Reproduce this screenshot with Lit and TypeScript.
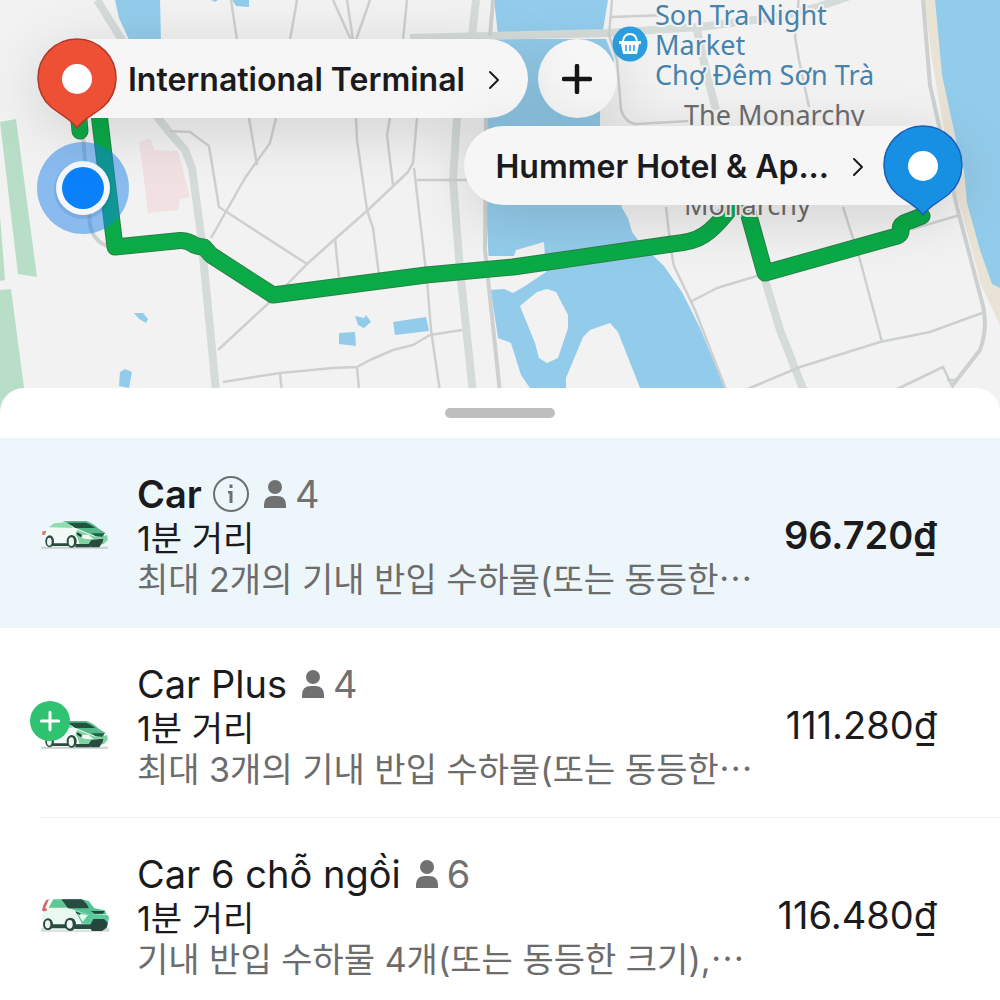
import { LitElement, html, svg, css, nothing } from "lit";
import { customElement, property, state } from "lit/decorators.js";

type CarKind = "car" | "plus" | "six";

interface Ride {
  id: CarKind;
  name: string;
  info: boolean;
  seats: number;
  eta: string;
  note: string;
  price: string;
}

const RIDES: Ride[] = [
  { id: "car", name: "Car", info: true, seats: 4, eta: "1분 거리", note: "최대 2개의 기내 반입 수하물(또는 동등한⋯", price: "96.720₫" },
  { id: "plus", name: "Car Plus", info: false, seats: 4, eta: "1분 거리", note: "최대 3개의 기내 반입 수하물(또는 동등한⋯", price: "111.280₫" },
  { id: "six", name: "Car 6 chỗ ngồi", info: false, seats: 6, eta: "1분 거리", note: "기내 반입 수하물 4개(또는 동등한 크기),⋯", price: "116.480₫" },
];

const ROUTE =
  "M98 105 L115 247 L180 240.500 Q188 240 194 245 Q199 247 204 247 L211 255 L273 295 L426 275 L513 267 L672 244 Q694 242 704 235 Q714 229 729 210 M746 205 L765 273 L897 236 Q902 234 901 229 Q899 226 904 223 L922 216 M79 120 L80 131";

@customElement("city-map")
export class CityMap extends LitElement {
  static styles = css`
    :host { display: block; position: relative; }
    .canvas { display: block; width: 100%; height: auto; }
    .park { fill: #b9dec8; }
    .clinic { fill: #f1e1e3; }
    .water { fill: #93cceb; }
    .land { fill: #f2f2f2; }
    .beach { fill: #e9e3d6; }
    .road { fill: none; stroke: #cdd0d0; stroke-width: 2.5; stroke-linejoin: round; }
    .bank { stroke-width: 4; }
    .avenue { fill: none; stroke: #d5dbd9; stroke-width: 8; stroke-linejoin: round; }
    .edge { fill: none; stroke: #2a8048; stroke-width: 17; stroke-linecap: round; stroke-linejoin: round; }
    .route { fill: none; stroke: #0aab47; stroke-width: 15; stroke-linecap: round; stroke-linejoin: round; }
    .label {
      position: absolute;
      margin: 0;
      font-family: "Noto Sans", sans-serif;
      font-size: 27px;
      line-height: 30px;
      white-space: nowrap;
      -webkit-text-stroke: 4px #f2f2f2;
      paint-order: stroke fill;
    }
    .market { top: 0; left: 65.5%; color: #4683ac; }
    .monarchy { top: 100px; left: 68.4%; color: #6c6c6c; }
    .monarchy-end { top: 190px; left: 68.4%; color: #6c6c6c; }
  `;

  render() {
    return html`
      <svg class="canvas" viewBox="0 0 1000 412" role="img" aria-label="Map">
        <rect class="land" width="1000" height="412" />
        <path class="park" d="M0 122 L16 119 L37 277 L18 274Z M0 215 L5 280 L0 281Z M0 290 L11 289 L24 388 V412 H0Z" />
        <path class="clinic" d="M139 142 L150 138 L155 150 L178 151 L190 197 L180 199 L178 210 L148 213Z" />
        <path class="water" d="M115 0 H160 L161 42 H130 L119 18Z M211 0 H218 L215 2Z M232 0 H249 V7 L236 6Z
          M134 313 L143 313 L148 319 L146 323 L139 319Z M120 372 L125 369 L132 372 L129 388 L119 386Z
          M355 316 L364 318 L366 315 L371 322 L364 328 L358 325Z M339 333 L355 332 L356 346 L339 344Z
          M393 322 L426 317 L429 331 L395 335Z" />
        <path class="water" d="M494 0 H608 L603 30 L498 35Z" />
        <path class="water" d="M487 39 H606 L614 60 L600 95 V130 L622 208 L628 218 L632 232 L642 245 L664 266 L682 292 L700 328 L725 388 L733 412 H535 L530 388 L521 375 L511 343 L498 338 L490 285 L486 205Z" />
        <path class="land" d="M487 256 L514 256 L516 250 L544 242 L546 272 L525 286 L513 293 L504 289 L490 290Z
          M520 306 L537 292 L547 289 L556 292 L568 315 L568 328 L558 358 L547 363 L539 358 L535 343Z
          M566 412 V378 L583 337 L590 330 L610 323 L618 332 L640 388 L648 412Z" />
        <path class="beach" d="M924 0 H940 L945 60 L960 120 L972 200 L1000 280 V325 L981 285 L968 235 L955 190 L943 125 L932 60Z" />
        <path class="water" d="M935 0 H1000 V288 L992 284 L980 250 L967 203 L964 170 L956 140 L942 75Z" />

        <path class="avenue" d="M97 0 L122 40 L140 75 L158 118 L170 133 L185 150 L192 168 L201 235 L218 412" />
        <path class="avenue" d="M476 0 L472 36 M457 118 L453 180 L460 270 L475 412" />
        <path class="avenue" d="M410 38 L490 36 L607 33 L700 27 L770 18 L815 8 L850 -4 M696 26 L707 75 L716 110 M765 280 L780 330 L812 412" />
        <path class="road bank" d="M83 135 L90 225 Q94 242 108 246 M493 0 L490 36 M486 118 L485 250 L502 412" />
        <path class="road" d="M170 131 L190 132 L209 146 L219 207 L307 264 M276 118 L270 143 L245 178 L211 238 M249 118 L257 165
          M218 350 L272 300 L307 264 L335 239 L368 210 L408 172 L413 163 L417 118
          M223 382 L280 373 L333 368 L357 367 L370 360 L393 350 L413 345 L430 335 L462 330 M280 374 L284 412 M357 367 L360 400
          M335 239 L339 277 M356 118 L357 140 L367 210 L373 228 L379 275 M390 118 L387 135 L393 185
          M414 168 L427 280 L431 330 L443 412 M417 180 H467
          M333 0 L351 40 M347 0 L353 40 M370 0 L356 40 M407 0 L403 40 M231 0 L237 40 M297 0 L290 40
          M612 0 L609 35 L617 60 L621 110 Q625 122 635 124 L690 121 M611 17 L668 15
          M799 -4 L795 37 L799 60 L809 107 M843 207 L860 260 L882 342 M912 229 L960 215
          M692 301 L717 288 L757 276 M745 390 L800 367 L880 342 L930 332 L982 313
          M666 207 L671 250 L674 266 L695 310 L730 400 M895 390 L943 367 L953 388 M947 380 H957" />
        <path class="road bank" d="M923 0 L930 85 L940 130 L957 207 L983 306 Q988 328 980 350 L952 386" />

        <circle cx="630" cy="44" r="17.500" fill="#2c9fe0" />
        <path d="M623 41 Q624 34 630 34 Q636 34 637 41" fill="none" stroke="#fff" stroke-width="2" />
        <path d="M619 41 H641 V44 H639 L637 54 H623 L621 44 H619Z" fill="#fff" />
        <path d="M626 45 V51 M630 45 V51 M634 45 V51" stroke="#2c9fe0" stroke-width="1.500" />

        <path class="edge" d=${ROUTE} />
        <path class="route" d=${ROUTE} />
        <circle cx="83" cy="188" r="46" fill="#1680ea" fill-opacity="0.48" />
        <circle cx="83" cy="190" r="29" fill="#20507e" fill-opacity="0.14" />
        <circle cx="83" cy="188" r="27" fill="#f4f8fd" />
        <circle cx="83" cy="188" r="21" fill="#0a80fb" />
      </svg>
      <p class="label market">Son Tra Night<br />Market<br />Chợ Đêm Sơn Trà</p>
      <p class="label monarchy">The Monarchy</p>
      <p class="label monarchy-end">Monarchy</p>
    `;
  }
}

const chevron = html`<svg class="chevron" viewBox="0 0 12 20" aria-hidden="true">
  <path d="M2 2 L10 10 L2 18" fill="none" stroke="#1c1c1e" stroke-width="2" stroke-linecap="round" stroke-linejoin="round" />
</svg>`;

const pin = (fill: string, edge: string) => html`<svg class="pin" viewBox="0 0 80 92" aria-hidden="true">
  <path d="M40 90 C35 82 24 77 14 69 A39 39 0 1 1 66 69 C56 77 45 82 40 90Z" fill=${fill} stroke=${edge} stroke-width="1.500" stroke-linejoin="round" />
  <circle cx="40" cy="41" r="15" fill="#fff" />
</svg>`;

@customElement("trip-stops")
export class TripStops extends LitElement {
  static styles = css`
    :host { display: block; font-family: Inter, "Liberation Sans", sans-serif; }
    button { border: 0; margin: 0; color: #1b1b1d; font: inherit; cursor: pointer; }
    .origin, .destination { position: absolute; display: flex; gap: 10px; }
    .origin { top: 39px; left: 37px; }
    .destination { top: 126px; right: 37px; }
    .pill, .add {
      height: 79px;
      box-sizing: border-box;
      background: #f6f6f6;
      border-radius: 40px;
      box-shadow: 0 12px 60px rgba(0, 0, 0, 0.14);
    }
    .pill {
      position: relative;
      display: flex;
      align-items: center;
      gap: 23px;
      font-size: 32px;
      font-weight: 600;
      line-height: 40px;
      white-space: nowrap;
    }
    .from { padding: 2px 28px 0 91px; }
    .to { padding: 2px 99px 0 31px; }
    .pin { position: absolute; top: -1px; width: 80px; height: 92px; }
    .from .pin { left: 0; }
    .to .pin { right: 0; }
    .chevron { width: 12px; height: 20px; flex: none; }
    .add { width: 79px; padding: 0; display: grid; place-items: center; }
    .plus { width: 30px; height: 30px; }
  `;

  render() {
    return html`
      <div class="origin">
        <button class="pill from">
          ${pin("#ed5035", "#b0392b")}
          <span>International Terminal</span>
          ${chevron}
        </button>
        <button class="add" aria-label="+">
          <svg class="plus" viewBox="0 0 30 30" aria-hidden="true">
            <path d="M15 2 V28 M2 15 H28" stroke="#161618" stroke-width="4.500" stroke-linecap="round" />
          </svg>
        </button>
      </div>
      <div class="destination">
        <button class="pill to">
          <span>Hummer Hotel &amp; Ap...</span>
          ${chevron}
          ${pin("#178fe3", "#1a5fb8")}
        </button>
      </div>
    `;
  }
}

const sedan = svg`
  <path d="M34 134 H234 V140 H34Z" fill="#c9d0d0" />
  <path d="M44 98 L58 74 L72 64 L110 60 L186 64 L214 86 L228 96 L234 108 L226 124 L212 136 L150 132 L48 130Z" fill="#f3faf5" />
  <path d="M56 76 L72 64 L112 60 L130 78 Z" fill="#8edcb0" />
  <path d="M98 57 L168 57 Q190 64 206 80 L228 94 L190 100 L142 80 L112 62Z" fill="#56b98b" />
  <path d="M112 62 L168 62 Q184 68 196 78 L136 78Z" fill="#20543f" />
  <path d="M142 84 L196 104 L232 100 L233 114 L222 126 L180 132 L148 126 Q146 108 136 98Z" fill="#7fd3a3" />
  <path d="M148 98 L176 98 L190 112 L160 110Z" fill="#f3faf5" />
  <path d="M140 91 L156 98 L154 106 L142 99Z" fill="#1d3d33" />
  <path d="M184 94 L224 94 L218 104 L196 103Z" fill="#245e47" />
  <path d="M184 114 L220 110 L218 120 L208 136 H184 L176 126Z" fill="#2a4b40" />
  <path d="M66 124 H116 V132 H66Z M136 126 H182 V136 H136Z" fill="#294c40" />
  <ellipse cx="59" cy="118" rx="13" ry="18" fill="#294c40" />
  <ellipse cx="58" cy="119" rx="7" ry="12" fill="#eef6f2" />
  <ellipse cx="125" cy="118" rx="15" ry="19" fill="#294c40" />
  <ellipse cx="124" cy="119" rx="8" ry="13" fill="#eef6f2" />
  <path d="M37 88 L49 87 L45 98 L37 99Z" fill="#de7569" />`;

const van = svg`
  <path d="M33 124 H237 V134 H33Z" fill="#d6d8d8" />
  <path d="M37 82 L56 36 H156 L190 66 L228 76 L234 104 L230 120 L210 130 H50 L38 120Z" fill="#e9f9f0" />
  <path d="M36 70 Q40 48 50 38 L60 37 Q52 46 50 72 L40 73Z" fill="#cf6a6d" />
  <path d="M46 62 L57 37 H66 L56 72Z" fill="#fff" />
  <path d="M56 62 L70 37 H98 L116 62Z" fill="#62c796" />
  <path d="M98 37 H156 L176 42 L193 64 L224 70 L230 82 L180 84 L116 64Z" fill="#55c593" />
  <path d="M94 37 H154 Q168 44 177 64 H114Z" fill="#294c42" />
  <path d="M136 72 L180 84 L232 84 L237 90 L235 104 L228 112 L156 110Z" fill="#58cb99" />
  <path d="M144 80 L174 84 L158 104Z" fill="#e9f9f0" />
  <path d="M137 73 L152 80 L150 84 L138 78Z M182 72 H224 L219 80 L194 80Z" fill="#20483b" />
  <path d="M190 96 H222 L234 108 L230 122 L216 132 H186 L178 120Z" fill="#26453c" />
  <path d="M62 112 H110 V124 H62Z M134 112 H184 V126 H134Z" fill="#294c40" />
  <ellipse cx="54" cy="112" rx="15" ry="18" fill="#294c40" />
  <ellipse cx="53" cy="112" rx="8" ry="12" fill="#eef6f2" />
  <ellipse cx="121" cy="112" rx="17" ry="20" fill="#294c40" />
  <ellipse cx="119" cy="112" rx="9" ry="13" fill="#eef6f2" />`;

const VEHICLES = {
  car: html`<svg class="vehicle" viewBox="0 9 270 180" aria-hidden="true">${sedan}</svg>`,
  plus: html`<svg class="vehicle" viewBox="0 9 270 180" aria-hidden="true">
    <g transform="translate(0 30)">${sedan}</g>
    <circle cx="60" cy="87" r="60" fill="#2fc271" />
    <path d="M60 61 V113 M34 87 H86" stroke="#fff" stroke-width="9" stroke-linecap="round" />
  </svg>`,
  six: html`<svg class="vehicle" viewBox="0 -6 270 180" aria-hidden="true">${van}</svg>`,
};

@customElement("ride-option")
export class RideOption extends LitElement {
  @property({ attribute: false }) ride!: Ride;
  @property({ type: Boolean, reflect: true }) selected = false;

  static styles = css`
    :host { display: block; }
    .row {
      display: flex;
      align-items: center;
      min-height: 190px;
      box-sizing: border-box;
      padding: 32px 63px 28px 30px;
      gap: 17px;
      cursor: pointer;
      color: #1b1b1d;
      font-family: Inter, "Noto Sans CJK KR", sans-serif;
      font-size: 38px;
    }
    :host([selected]) .row { background: #edf7fb; }
    .pick { appearance: none; position: absolute; width: 0; height: 0; margin: 0; }
    .vehicle { flex: none; width: 90px; height: 60px; }
    .text { flex: 1; min-width: 0; }
    .title { display: flex; align-items: center; height: 48px; line-height: 48px; white-space: nowrap; }
    .info { width: 36px; height: 36px; margin-left: 11px; }
    .person { width: 22px; height: 28px; margin: 0 9px 0 15px; }
    .seats { color: #717171; }
    .eta, .note { font-size: 34px; white-space: nowrap; }
    .eta { line-height: 42px; }
    .note { line-height: 40px; color: #6c6c6c; }
    .price { flex: none; }
    :host([selected]) .name, :host([selected]) .price { font-weight: 600; }
  `;

  private choose() {
    this.dispatchEvent(new CustomEvent("choose", { detail: this.ride.id }));
  }

  render() {
    const r = this.ride;
    return html`
      <label class="row">
        <input class="pick" type="radio" name="ride" .checked=${this.selected} @change=${this.choose} />
        ${VEHICLES[r.id]}
        <div class="text">
          <div class="title">
            <span class="name">${r.name}</span>
            ${r.info
              ? html`<svg class="info" viewBox="0 0 36 36" aria-hidden="true">
                  <circle cx="18" cy="18" r="17" fill="none" stroke="#6d6f70" stroke-width="2" />
                  <path d="M16.500 8.500 H19.500 V12 H16.500Z M15 15 H19.500 V27 H16.500 V17.500 H15Z" fill="#6d6f70" />
                </svg>`
              : nothing}
            <svg class="person" viewBox="0 0 22 28" aria-hidden="true">
              <circle cx="11" cy="7" r="7" fill="#717171" />
              <path d="M0 28 V25 Q0 16 9 16 H13 Q22 16 22 25 V28Z" fill="#717171" />
            </svg>
            <span class="seats">${r.seats}</span>
          </div>
          <div class="eta" lang="ko">${r.eta}</div>
          <div class="note" lang="ko">${r.note}</div>
        </div>
        <span class="price">${r.price}</span>
      </label>
    `;
  }
}

@customElement("app-root")
export class AppRoot extends LitElement {
  @state() private chosen: CarKind = "car";

  static styles = css`
    :host { display: block; background: #fff; }
    .map { position: relative; overflow: hidden; }
    .sheet {
      position: relative;
      margin-top: -24px;
      background: #fff;
      border-radius: 24px 24px 0 0;
    }
    .grip { display: flex; justify-content: center; padding: 20px 0; }
    .handle { width: 110px; height: 10px; border-radius: 5px; background: #bebebe; }
    .rule { height: 1px; margin: -1px 0 0 40px; background: #f1f1f1; }
  `;

  render() {
    return html`
      <section class="map">
        <city-map></city-map>
        <trip-stops></trip-stops>
      </section>
      <main class="sheet">
        <div class="grip"><div class="handle"></div></div>
        ${RIDES.map(
          (r, i) => html`
            ${i > 1 ? html`<div class="rule"></div>` : nothing}
            <ride-option
              .ride=${r}
              ?selected=${this.chosen === r.id}
              @choose=${(e: CustomEvent<CarKind>) => (this.chosen = e.detail)}
            ></ride-option>
          `
        )}
      </main>
    `;
  }
}
